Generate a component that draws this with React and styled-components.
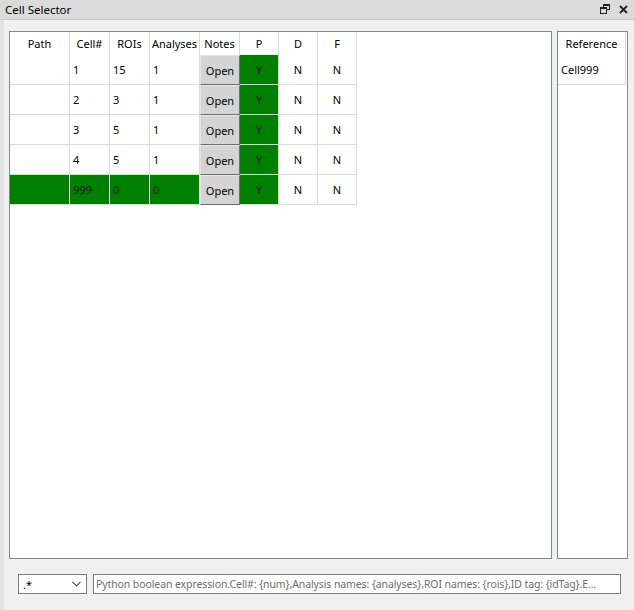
import React from "react";
import styled, { createGlobalStyle } from "styled-components";

const Global = createGlobalStyle`
  html, body { margin: 0; padding: 0; background: #f0f0f0; }
  body { font-family: "Noto Sans", "Open Sans", sans-serif; font-size: 11px; color: #000; }
  * { box-sizing: border-box; }
`;

const Window = styled.div`
  width: 634px;
  height: 610px;
  display: flex;
  flex-direction: column;
  background: #f0f0f0;
  overflow: hidden;
`;

const TitleBar = styled.div`
  height: 20px;
  flex: none;
  display: flex;
  align-items: center;
  padding: 0 6px 1px 5px;
  background: #dbdbdb;
  border-bottom: 1px solid #c6c6c6;
`;

const Title = styled.span`
  flex: 1;
  font-size: 11.5px;
  color: #000;
`;

const TitleIcons = styled.div`
  display: flex;
  align-items: center;
  gap: 9px;
`;

const Body = styled.div`
  flex: 1;
  display: flex;
  flex-direction: column;
  border-left: 4px solid #e2e2e2;
  padding: 11px 0 0 5px;
`;

const Panels = styled.div`
  display: flex;
  gap: 5px;
  height: 528px;
`;

const Frame = styled.div`
  width: ${(p) => p.$w}px;
  height: 100%;
  border: 1px solid #828790;
  background: #fff;
  overflow: hidden;
`;

const Grid = styled.div`
  display: grid;
  grid-template-columns: ${(p) => p.$cols};
  grid-auto-rows: 30px;
  grid-template-rows: 23px;
`;

const HeadCell = styled.div`
  border-right: 1px solid #dadada;
  display: flex;
  align-items: center;
  justify-content: center;
  white-space: nowrap;
  overflow: hidden;
  color: #000;
`;

const Cell = styled.div`
  border-right: 1px solid #dadada;
  border-bottom: 1px solid #dadada;
  background: ${(p) => (p.$green ? "#008000" : "#fff")};
  color: ${(p) => (p.$green ? "#0a1a0a" : "#000")};
  display: flex;
  align-items: center;
  justify-content: ${(p) => (p.$center ? "center" : "flex-start")};
  padding-left: ${(p) => (p.$center ? 0 : 3)}px;
  padding-bottom: 1px;
  white-space: nowrap;
  overflow: hidden;
`;

const ButtonCell = styled.div`
  display: flex;
`;

const OpenButton = styled.div`
  flex: 1;
  background: #d4d4d4;
  border-top: 1px solid #e6e6e6;
  border-left: 1px solid #e6e6e6;
  border-right: 1px solid #6e6e6e;
  border-bottom: 1px solid #6e6e6e;
  display: flex;
  align-items: center;
  justify-content: center;
  padding-top: 1px;
  color: #000;
`;

const Footer = styled.div`
  display: flex;
  gap: 6px;
  padding: 15px 0 0 9px;
`;

const Combo = styled.div`
  width: 69px;
  height: 20px;
  background: #fff;
  border: 1px solid #7a7a7a;
  display: flex;
  align-items: center;
  justify-content: space-between;
  padding: 0 5px 0 4px;
  font-size: 11px;
`;

const FilterInput = styled.div`
  width: 528px;
  height: 20px;
  background: #fff;
  border: 1px solid #7a7a7a;
  display: flex;
  align-items: center;
  padding: 0 2px;
  color: #6d6d6d;
  font-size: 10.5px;
  letter-spacing: -0.1px;
  white-space: nowrap;
  overflow: hidden;
`;

const rows = [
  { num: "1", rois: "15", an: "1" },
  { num: "2", rois: "3", an: "1" },
  { num: "3", rois: "5", an: "1" },
  { num: "4", rois: "5", an: "1" },
  { num: "999", rois: "0", an: "0", sel: true },
];

const headers = ["Path", "Cell#", "ROIs", "Analyses", "Notes", "P", "D", "F"];

export default function App() {
  return (
    <Window>
      <Global />
      <TitleBar>
        <Title>Cell Selector</Title>
        <TitleIcons>
          <svg width="10" height="10" viewBox="0 0 10 10">
            <rect x="3.5" y="0.5" width="6" height="5" fill="none" stroke="#222" strokeWidth="1" />
            <rect x="3.5" y="0.5" width="6" height="1.5" fill="#222" />
            <rect x="0.5" y="3.5" width="6" height="6" fill="#dbdbdb" stroke="#222" strokeWidth="1" />
            <rect x="0.5" y="3.5" width="6" height="1.5" fill="#222" />
          </svg>
          <svg width="9" height="9" viewBox="0 0 9 9">
            <path d="M1 1 L8 8 M8 1 L1 8" stroke="#222" strokeWidth="1.8" />
          </svg>
        </TitleIcons>
      </TitleBar>
      <Body>
        <Panels>
          <Frame $w={543}>
            <Grid $cols="60px 40px 40px 50px 40px 39px 39px 39px">
              {headers.map((h) => (
                <HeadCell key={h}>{h}</HeadCell>
              ))}
              {rows.map((r) => (
                <React.Fragment key={r.num}>
                  <Cell $green={r.sel} />
                  <Cell $green={r.sel}>{r.num}</Cell>
                  <Cell $green={r.sel}>{r.rois}</Cell>
                  <Cell $green={r.sel}>{r.an}</Cell>
                  <ButtonCell>
                    <OpenButton>Open</OpenButton>
                  </ButtonCell>
                  <Cell $green $center>Y</Cell>
                  <Cell $center>N</Cell>
                  <Cell $center>N</Cell>
                </React.Fragment>
              ))}
            </Grid>
          </Frame>
          <Frame $w={71}>
            <Grid $cols="68px">
              <HeadCell>Reference</HeadCell>
              <Cell>Cell999</Cell>
            </Grid>
          </Frame>
        </Panels>
        <Footer>
          <Combo>
            <span>.*</span>
            <svg width="9" height="6" viewBox="0 0 9 6">
              <path d="M0.5 0.8 L4.5 4.8 L8.5 0.8" fill="none" stroke="#444" strokeWidth="1.1" />
            </svg>
          </Combo>
          <FilterInput>
            Python boolean expression.Cell#: {"{num}"},Analysis names: {"{analyses}"},ROI names: {"{rois}"},ID tag: {"{idTag}"}.E...
          </FilterInput>
        </Footer>
      </Body>
    </Window>
  );
}
